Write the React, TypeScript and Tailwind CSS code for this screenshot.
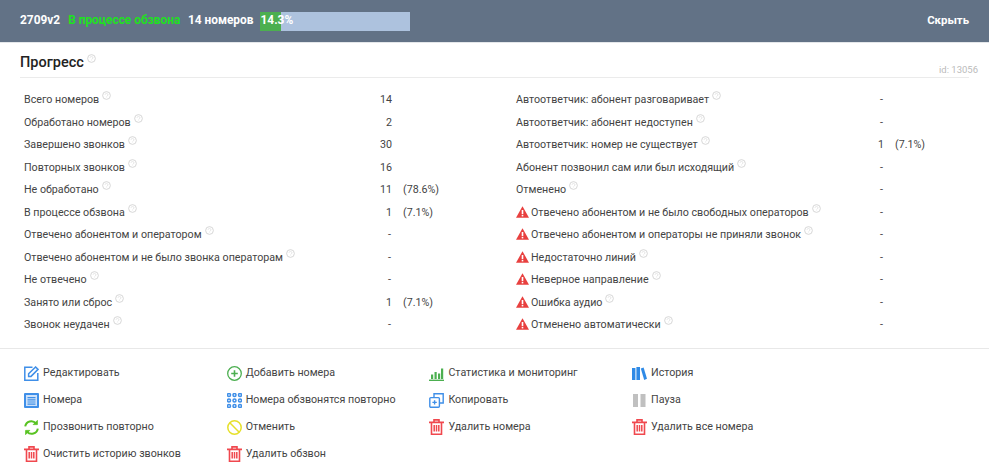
import type { ReactNode } from "react";

const Info = () => (
  <svg className="inline-block w-[9px] h-[9px] ml-[3px] mb-[9px]" viewBox="0 0 10 10" fill="none">
    <circle cx="5" cy="5" r="4.3" stroke="#d2d2d2" strokeWidth="1" />
    <path d="M3.4 4.2a1.6 1.5 0 1 1 2.4 1.3L5 6.2M5 7.4v.4" stroke="#dadada" strokeWidth="0.8" />
  </svg>
);

const Warn = () => (
  <svg className="inline-block w-[13px] h-[12px] mr-[2px] mb-[2px] align-middle" viewBox="0 0 13 12">
    <path d="M6.5 0.2 13 11.8H0Z" fill="#e8403f" />
    <rect x="5.7" y="4" width="1.6" height="4" fill="#fff" />
    <rect x="5.7" y="8.8" width="1.6" height="1.6" fill="#fff" />
  </svg>
);

const Trash = () => (
  <svg className="w-[15px] h-[16px]" viewBox="0 0 15 16" fill="none" stroke="#f0484e" strokeWidth="1.6">
    <path d="M0 3.4h15M5 3.2V.9h5v2.3M2.5 3.4v11.8h10V3.4" />
    <path d="M5.2 6v6.6M7.5 6v6.6M9.8 6v6.6" strokeWidth="1.5" />
  </svg>
);

const Edit = () => (
  <svg className="w-[15px] h-[15px]" viewBox="0 0 15 15" fill="none" stroke="#3f8fe8" strokeWidth="1.5">
    <path d="M8.5 1.2H.8v13h13V7" />
    <path d="M4.6 7.8 11.6 1l2.4 2.4-7 7H4.6Z" />
  </svg>
);

const List = () => (
  <svg className="w-[15px] h-[15px]" viewBox="0 0 15 15">
    <rect width="15" height="15" rx="1" fill="#3f8fe8" />
    <rect x="2" y="2" width="11" height="11" fill="#cfe2f9" />
    <path d="M3.5 4.6h8M3.5 6.8h8M3.5 9h8M3.5 11.2h8" stroke="#3f8fe8" strokeWidth="1.2" />
  </svg>
);

const Refresh = () => (
  <svg className="w-[15px] h-[15px]" viewBox="0 0 15 15" fill="none" stroke="#58c322" strokeWidth="2">
    <path d="M1.2 6.4A6.2 6.2 0 0 1 12 3.4" />
    <path d="M13.8 8.6A6.2 6.2 0 0 1 3 11.6" />
    <path d="M13.4 .4v4.2H9.2ZM1.6 14.6v-4.2h4.2Z" strokeWidth="0.8" fill="#58c322" />
  </svg>
);

const Plus = () => (
  <svg className="w-[15px] h-[15px]" viewBox="0 0 15 15" fill="none" stroke="#4caf50" strokeWidth="1.3">
    <circle cx="7.5" cy="7.5" r="6.8" />
    <path d="M7.5 4.2v6.6M4.2 7.5h6.6" strokeWidth="1.6" />
  </svg>
);

const Dots = () => (
  <svg className="w-[15px] h-[15px]" viewBox="0 0 15 15" fill="none" stroke="#3f8fe8" strokeWidth="1.5">
    {[2, 7.5, 13].map((y) =>
      [2, 7.5, 13].map((x) => <circle key={`${x}-${y}`} cx={x} cy={y} r="1.5" />)
    )}
  </svg>
);

const Ban = () => (
  <svg className="w-[15px] h-[15px]" viewBox="0 0 15 15" fill="none" stroke="#e6e02a" strokeWidth="1.5">
    <circle cx="7.5" cy="7.5" r="6.7" />
    <path d="M2.8 2.8l9.4 9.4" />
  </svg>
);

const Bars = () => (
  <svg className="w-[15px] h-[15px]" viewBox="0 0 15 15" fill="#4caf50">
    <rect x="2" y="8.5" width="2.2" height="4.5" />
    <rect x="5.5" y="6" width="2.2" height="7" />
    <rect x="9" y="7.5" width="2.2" height="5.5" />
    <rect x="12" y="2.5" width="2.2" height="10.5" />
    <rect x="0" y="13.6" width="15" height="1.4" />
  </svg>
);

const Copy = () => (
  <svg className="w-[15px] h-[15px]" viewBox="0 0 15 15" fill="none" stroke="#3f8fe8" strokeWidth="1.4">
    <path d="M5 4.4V.8h9.2V10h-3.6" />
    <rect x=".8" y="4.6" width="9.6" height="9.6" rx="1" />
    <path d="M5.6 7.2v4.4M3.4 9.4h4.4" />
  </svg>
);

const Books = () => (
  <svg className="w-[15px] h-[13px]" viewBox="0 0 15 13" fill="#2f8ae6">
    <path d="M0 1h3.4v12H0Z" />
    <path d="M4.4 0h3.6v13H4.4Z" />
    <path d="M8.8 1.4 11.6.4 15 11.8 12.2 13Z" />
  </svg>
);

const Pause = () => (
  <svg className="w-[13px] h-[13px] ml-[1px]" viewBox="0 0 13 13" fill="#c0c0c0">
    <rect x="0" y="0" width="5" height="13" />
    <rect x="7.5" y="0" width="5" height="13" />
  </svg>
);

type Stat = { label: string; value: string; pct?: string; warn?: boolean };

const leftStats: Stat[] = [
  { label: "Всего номеров", value: "14" },
  { label: "Обработано номеров", value: "2" },
  { label: "Завершено звонков", value: "30" },
  { label: "Повторных звонков", value: "16" },
  { label: "Не обработано", value: "11", pct: "(78.6%)" },
  { label: "В процессе обзвона", value: "1", pct: "(7.1%)" },
  { label: "Отвечено абонентом и оператором", value: "-" },
  { label: "Отвечено абонентом и не было звонка операторам", value: "-" },
  { label: "Не отвечено", value: "-" },
  { label: "Занято или сброс", value: "1", pct: "(7.1%)" },
  { label: "Звонок неудачен", value: "-" },
];

const rightStats: Stat[] = [
  { label: "Автоответчик: абонент разговаривает", value: "-" },
  { label: "Автоответчик: абонент недоступен", value: "-" },
  { label: "Автоответчик: номер не существует", value: "1", pct: "(7.1%)" },
  { label: "Абонент позвонил сам или был исходящий", value: "-" },
  { label: "Отменено", value: "-" },
  { label: "Отвечено абонентом и не было свободных операторов", value: "-", warn: true },
  { label: "Отвечено абонентом и операторы не приняли звонок", value: "-", warn: true },
  { label: "Недостаточно линий", value: "-", warn: true },
  { label: "Неверное направление", value: "-", warn: true },
  { label: "Ошибка аудио", value: "-", warn: true },
  { label: "Отменено автоматически", value: "-", warn: true },
];

const actions: { icon: ReactNode; label: string }[][] = [
  [
    { icon: <Edit />, label: "Редактировать" },
    { icon: <List />, label: "Номера" },
    { icon: <Refresh />, label: "Прозвонить повторно" },
    { icon: <Trash />, label: "Очистить историю звонков" },
  ],
  [
    { icon: <Plus />, label: "Добавить номера" },
    { icon: <Dots />, label: "Номера обзвонятся повторно" },
    { icon: <Ban />, label: "Отменить" },
    { icon: <Trash />, label: "Удалить обзвон" },
  ],
  [
    { icon: <Bars />, label: "Статистика и мониторинг" },
    { icon: <Copy />, label: "Копировать" },
    { icon: <Trash />, label: "Удалить номера" },
  ],
  [
    { icon: <Books />, label: "История" },
    { icon: <Pause />, label: "Пауза" },
    { icon: <Trash />, label: "Удалить все номера" },
  ],
];

const StatColumn = ({ stats }: { stats: Stat[] }) => (
  <div className="flex flex-col w-[492px] shrink-0">
    {stats.map((s) => (
      <div key={s.label} className="flex items-center h-[22.5px]">
        <div className="w-[368px] flex justify-between items-center">
          <span className="whitespace-nowrap">
            {s.warn && <Warn />}
            {s.label}
            <Info />
          </span>
          <span className={s.value === "-" ? "mr-[1px]" : ""}>{s.value}</span>
        </div>
        {s.pct && <span className="ml-[11px]">{s.pct}</span>}
      </div>
    ))}
  </div>
);

export default function App() {
  return (
    <div className="w-[989px] h-[475px] bg-white overflow-hidden text-[#444] text-[10.7px] font-['Roboto',sans-serif]">
      <header className="h-[43px] bg-[#627286] flex items-center px-[20px] text-white font-bold text-[11.9px] border-b border-[#e4e7ea]">
        <span>2709v2</span>
        <span className="ml-[8px] text-[#1fe01f]">В процессе обзвона</span>
        <span className="ml-[7.5px]">14 номеров</span>
        <div className="ml-[7px] w-[150px] h-[19px] bg-[#adc2de] relative flex items-center">
          <div className="absolute left-0 top-0 h-full w-[21px] bg-[#4caf50]" />
          <span className="relative">14.3%</span>
        </div>
        <span className="ml-auto text-[11.4px]">Скрыть</span>
      </header>

      <section className="px-[20px]">
        <div className="flex items-end justify-between h-[35px] border-b border-[#ebebeb] relative">
          <h2 className="text-[14.5px] font-medium text-[#222] leading-none pb-[5px]">
            Прогресс
            <Info />
          </h2>
          <span className="text-[9.5px] text-[#bbb] absolute right-[-9px] bottom-[0px]">id: 13056</span>
        </div>
      </section>

      <section className="flex pl-[24px] pt-[11px] pb-[11px] border-b border-[#e8e8e8]">
        <StatColumn stats={leftStats} />
        <StatColumn stats={rightStats} />
      </section>

      <section className="flex pl-[24px] pt-[11px]">
        {actions.map((col, i) => (
          <div key={i} className="w-[202.7px] flex flex-col">
            {col.map((a) => (
              <div key={a.label} className="flex items-center h-[27px]">
                <div className="w-[19px] shrink-0">{a.icon}</div>
                <span>{a.label}</span>
              </div>
            ))}
          </div>
        ))}
      </section>
    </div>
  );
}
